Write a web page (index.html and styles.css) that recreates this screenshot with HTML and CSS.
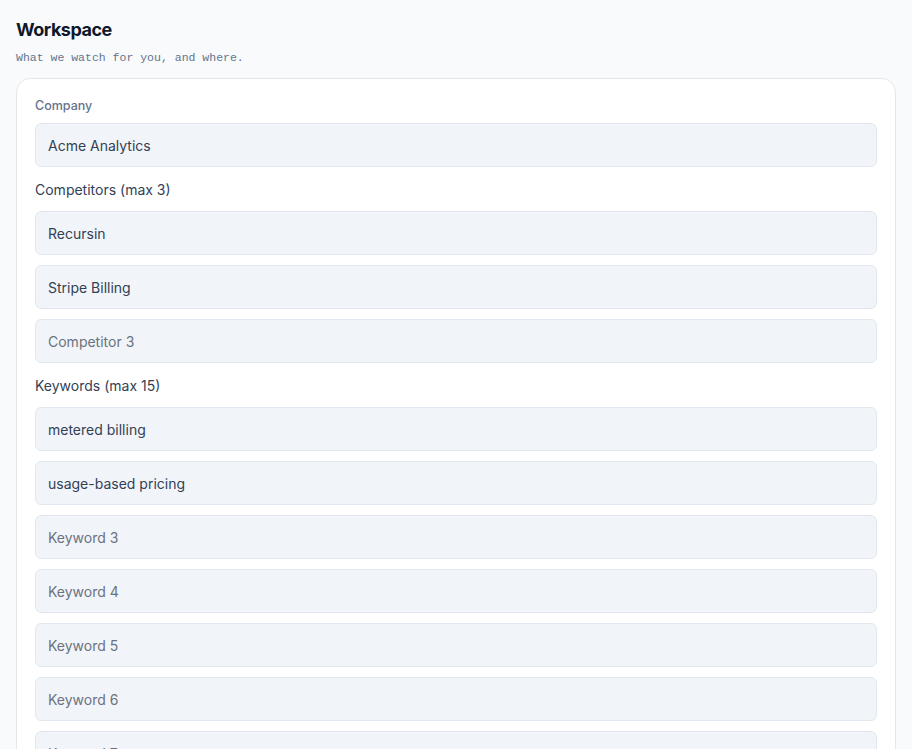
FILE: index.html
```html
<!DOCTYPE html>
<html lang="en">
<head>
<meta charset="utf-8">
<title>Workspace</title>
<link rel="stylesheet" href="styles.css">
</head>
<body>
<main class="page">
  <h1 class="title">Workspace</h1>
  <p class="subtitle">What we watch for you, and where.</p>
  <section class="card">
    <label class="label-small" for="company">Company</label>
    <input class="field" id="company" type="text" value="Acme Analytics">

    <div class="label">Competitors (max 3)</div>
    <input class="field" type="text" value="Recursin">
    <input class="field" type="text" value="Stripe Billing">
    <input class="field" type="text" placeholder="Competitor 3">

    <div class="label">Keywords (max 15)</div>
    <input class="field" type="text" value="metered billing">
    <input class="field" type="text" value="usage-based pricing">
    <input class="field" type="text" placeholder="Keyword 3">
    <input class="field" type="text" placeholder="Keyword 4">
    <input class="field" type="text" placeholder="Keyword 5">
    <input class="field" type="text" placeholder="Keyword 6">
    <input class="field" type="text" placeholder="Keyword 7">
    <input class="field" type="text" placeholder="Keyword 8">
    <input class="field" type="text" placeholder="Keyword 9">
    <input class="field" type="text" placeholder="Keyword 10">
    <input class="field" type="text" placeholder="Keyword 11">
    <input class="field" type="text" placeholder="Keyword 12">
    <input class="field" type="text" placeholder="Keyword 13">
    <input class="field" type="text" placeholder="Keyword 14">
    <input class="field" type="text" placeholder="Keyword 15">
  </section>
</main>
</body>
</html>
```

FILE: styles.css
```css
* { box-sizing: border-box; }
html, body {
  margin: 0;
  padding: 0;
  background: #f8fafc;
}
body {
  font-family: "Inter", "Noto Sans", sans-serif;
  color: #334155;
}
.page {
  padding: 18px 16px 32px;
}
.title {
  margin: 0;
  font-size: 18px;
  line-height: 24px;
  font-weight: 700;
  letter-spacing: -0.5px;
  color: #0f172a;
}
.subtitle {
  margin: 8px 0 0;
  font-family: "Liberation Mono", "DejaVu Sans Mono", monospace;
  font-size: 11.5px;
  line-height: 16px;
  color: #64748b;
}
.card {
  margin-top: 12px;
  background: #ffffff;
  border: 1px solid #e5e7eb;
  border-radius: 14px;
  padding: 18px;
  display: flex;
  flex-direction: column;
  gap: 10px;
}
.label-small {
  font-size: 12.5px;
  line-height: 17px;
  font-weight: 500;
  color: #64748b;
  margin-bottom: -1px;
}
.label {
  font-size: 14px;
  line-height: 24px;
  padding-top: 1px;
  margin-bottom: -1px;
  color: #334155;
}
.field {
  display: block;
  width: 100%;
  height: 44px;
  margin: 0;
  padding: 0 12px;
  font-family: "Inter", "Noto Sans", sans-serif;
  font-size: 14px;
  color: #334155;
  background: #f1f5f9;
  border: 1px solid #e2e8f0;
  border-radius: 6px;
  outline: none;
}
.field::placeholder {
  color: #6b7280;
  opacity: 1;
}
```
